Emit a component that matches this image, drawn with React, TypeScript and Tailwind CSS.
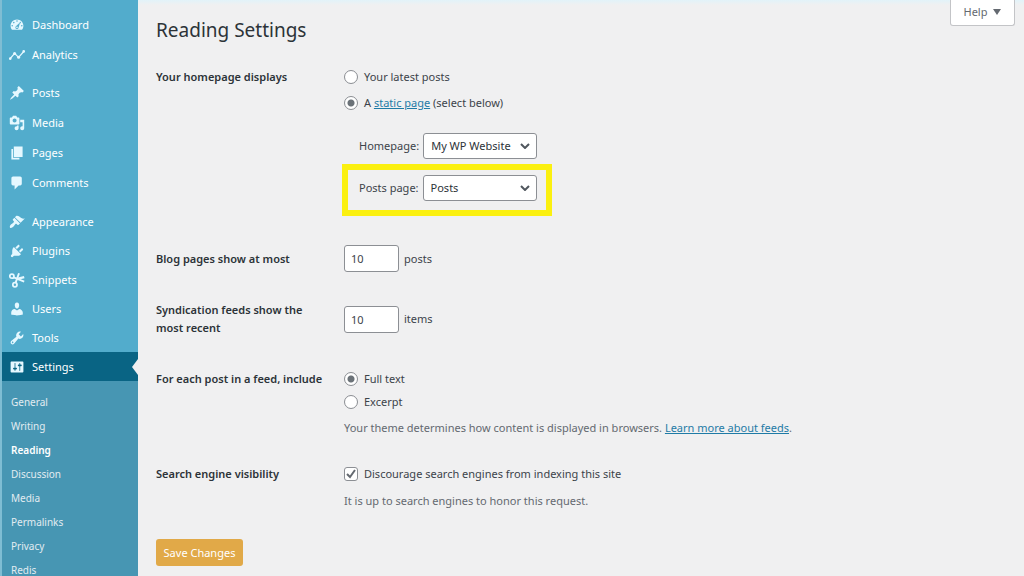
import { FC, ReactNode } from 'react';

const icons: Record<string, ReactNode> = {
  dashboard: (
    <path d="M3.76 16h12.48c1.1-1.37 1.76-3.11 1.76-5 0-4.42-3.58-8-8-8s-8 3.58-8 8c0 1.89.66 3.63 1.76 5zM10 4c.55 0 1 .45 1 1s-.45 1-1 1-1-.45-1-1 .45-1 1-1zM6 6c.55 0 1 .45 1 1s-.45 1-1 1-1-.45-1-1 .45-1 1-1zm8 0c.55 0 1 .45 1 1s-.45 1-1 1-1-.45-1-1 .45-1 1-1zm-5.37 5.55L14 6.5l-2 6.5c0 1.1-.9 2-2 2s-2-.9-2-2c0-.57.24-1.08.63-1.45zM4 10c.55 0 1 .45 1 1s-.45 1-1 1-1-.45-1-1 .45-1 1-1zm12 0c.55 0 1 .45 1 1s-.45 1-1 1-1-.45-1-1 .45-1 1-1zm-5 3c0-.55-.45-1-1-1s-1 .45-1 1 .45 1 1 1 1-.45 1-1z" />
  ),
  analytics: (
    <g>
      <path d="M1 15L7 8l5 5 7-8" fill="none" stroke="currentColor" strokeWidth="1.6" />
      <circle cx="1.6" cy="14.5" r="1.7" />
      <circle cx="7" cy="8.2" r="1.9" />
      <circle cx="12" cy="12.8" r="1.9" />
      <circle cx="18.4" cy="5.5" r="1.7" />
    </g>
  ),
  posts: (
    <path d="M10.44 3.02l1.82-1.82 6.36 6.35-1.83 1.82c-1.05-.68-2.48-.57-3.41.36l-.75.75c-.92.93-1.04 2.35-.35 3.41l-1.83 1.82-2.41-2.41-2.8 2.79c-.42.42-3.38 2.71-3.8 2.29s1.86-3.39 2.28-3.81l2.79-2.79L4.1 9.36l1.83-1.82c1.05.69 2.48.57 3.4-.36l.75-.75c.93-.92 1.05-2.35.36-3.41z" />
  ),
  media: (
    <path
      fillRule="evenodd"
      d="M13 11V4c0-.55-.45-1-1-1h-1.67L9 1H5L3.67 3H2c-.55 0-1 .45-1 1v7c0 .55.45 1 1 1h10c.55 0 1-.45 1-1zM7 4.5c1.38 0 2.5 1.12 2.5 2.5S8.38 9.5 7 9.5 4.5 8.38 4.5 7 5.62 4.5 7 4.5zM14 6h5v10.5c0 1.38-1.12 2.5-2.5 2.5S14 17.88 14 16.5s1.12-2.5 2.5-2.5c.17 0 .34.02.5.05V9h-3V6zm-4 8.05V13h2v3.5c0 1.38-1.12 2.5-2.5 2.5S7 17.88 7 16.5 8.12 14 9.5 14c.17 0 .34.02.5.05z"
    />
  ),
  pages: <path d="M6 15V2h11v13H6zm-1 1h8v2H3V5h2v11z" />,
  comments: (
    <path d="M5 2h9c1.1 0 2 .9 2 2v7c0 1.1-.9 2-2 2h-2l-5 5v-5H5c-1.1 0-2-.9-2-2V4c0-1.1.9-2 2-2z" />
  ),
  appearance: (
    <path d="M14.48 11.06L7.41 3.99l1.5-1.5c.5-.56 2.3-.47 3.51.32 1.21.8 1.43 1.28 2.91 2.1 1.18.64 2.45 1.26 4.45.85zm-.71.71L6.7 4.7 4.93 6.47c-.39.39-.39 1.02 0 1.41l1.06 1.06c.39.39.39 1.03 0 1.42-.6.6-1.43 1.11-2.21 1.69-.35.26-.7.53-1.01.84C1.43 14.23.4 16.08 1.4 17.07c.99 1 2.84-.03 4.18-1.36.31-.31.58-.66.85-1.02.57-.78 1.08-1.61 1.69-2.21.39-.39 1.02-.39 1.41 0l1.06 1.06c.39.39 1.02.39 1.41 0z" />
  ),
  plugins: (
    <path d="M13.11 4.36L9.87 7.6 8 5.73l3.24-3.24c.35-.34 1.05-.2 1.56.32.52.51.66 1.21.31 1.55zm-8 1.77l.91-1.12 9.01 9.01-1.19.84c-.71.71-2.63 1.16-3.82 1.16H6.14L4.9 17.26c-.59.59-1.54.59-2.12 0-.59-.58-.59-1.53 0-2.12l1.24-1.24v-3.88c0-1.13.4-3.19 1.09-3.89zm7.26 3.97l3.24-3.24c.34-.35 1.04-.21 1.55.31.52.51.66 1.21.31 1.55l-3.24 3.25z" />
  ),
  snippets: (
    <g fill="none" stroke="currentColor" strokeWidth="2.2">
      <circle cx="3.6" cy="5.2" r="2.6" />
      <circle cx="7.4" cy="16" r="2.6" />
      <path d="M5.8 6.6L19 12M8.2 13.6L12.5 1.5" strokeWidth="2.4" />
      <path d="M9 9l10-2.6" strokeWidth="3" />
    </g>
  ),
  users: (
    <path d="M10 9.25c-2.27 0-2.73-3.44-2.73-3.44C7 4.02 7.82 2 9.97 2c2.16 0 2.98 2.02 2.71 3.81 0 0-.41 3.44-2.68 3.44zm0 2.57L12.72 10c2.39 0 4.52 2.33 4.52 4.53v2.49s-3.65 1.13-7.24 1.13c-3.65 0-7.24-1.13-7.24-1.13v-2.49c0-2.25 1.94-4.48 4.47-4.48z" />
  ),
  tools: (
    <path d="M16.68 9.77c-1.34 1.34-3.3 1.67-4.95.99l-5.41 6.52c-.99.99-2.59.99-3.58 0s-.99-2.59 0-3.57l6.52-5.42c-.68-1.65-.35-3.61.99-4.95 1.28-1.28 3.12-1.62 4.72-1.06l-2.89 2.89 2.82 2.82 2.86-2.87c.53 1.58.18 3.39-1.08 4.65zM3.81 16.21c.4.39 1.04.39 1.43 0 .4-.4.4-1.04 0-1.43-.39-.4-1.03-.4-1.43 0-.39.39-.39 1.03 0 1.43z" />
  ),
  settings: (
    <path d="M18 16V4c0-.55-.45-1-1-1H3c-.55 0-1 .45-1 1v12c0 .55.45 1 1 1h14c.55 0 1-.45 1-1zM8 11h1c.55 0 1 .45 1 1s-.45 1-1 1H8v1.5c0 .28-.22.5-.5.5s-.5-.22-.5-.5V13H6c-.55 0-1-.45-1-1s.45-1 1-1h1V5.5c0-.28.22-.5.5-.5s.5.22.5.5V11zm5-2h-1c-.55 0-1-.45-1-1s.45-1 1-1h1V5.5c0-.28.22-.5.5-.5s.5.22.5.5V7h1c.55 0 1 .45 1 1s-.45 1-1 1h-1v5.5c0 .28-.22.5-.5.5s-.5-.22-.5-.5V9z" />
  ),
};

const menuGroups = [
  [
    { label: 'Dashboard', icon: 'dashboard' },
    { label: 'Analytics', icon: 'analytics' },
  ],
  [
    { label: 'Posts', icon: 'posts' },
    { label: 'Media', icon: 'media' },
    { label: 'Pages', icon: 'pages' },
    { label: 'Comments', icon: 'comments' },
  ],
];

const adminGroup = [
  { label: 'Appearance', icon: 'appearance' },
  { label: 'Plugins', icon: 'plugins' },
  { label: 'Snippets', icon: 'snippets' },
  { label: 'Users', icon: 'users' },
  { label: 'Tools', icon: 'tools' },
  { label: 'Settings', icon: 'settings', current: true },
];

const submenu = [
  'General',
  'Writing',
  'Reading',
  'Discussion',
  'Media',
  'Permalinks',
  'Privacy',
  'Redis',
];

const MenuLink: FC<{ label: string; icon: string; current?: boolean }> = ({
  label,
  icon,
  current,
}) => (
  <a
    href="#"
    className={`flex h-full items-center gap-[7px] pl-[7px] text-white ${
      current ? 'relative bg-[#096484]' : ''
    }`}
  >
    <svg viewBox="0 0 20 20" className="size-4 fill-current text-[#e5f8ff]">
      {icons[icon]}
    </svg>
    {label}
    {current && (
      <span className="absolute right-0 border-y-8 border-r-6 border-y-transparent border-r-[#f0f0f1]" />
    )}
  </a>
);

const Sidebar: FC = () => (
  <nav className="w-[138px] shrink-0 overflow-hidden border-l-2 border-[#7fbdd3] bg-[#52accc] pt-[10px]">
    {menuGroups.map((group, i) => (
      <ul key={i} className="mb-2">
        {group.map((item) => (
          <li key={item.label} className="h-[30px]">
            <MenuLink {...item} />
          </li>
        ))}
      </ul>
    ))}
    <ul className="pt-px">
      {adminGroup.map((item) => (
        <li key={item.label} className="h-[29px]">
          <MenuLink {...item} />
        </li>
      ))}
    </ul>
    <ul className="bg-[#4796b3] pt-[9px] text-[10px]">
      {submenu.map((label) => (
        <li key={label} className="h-6">
          <a
            href="#"
            className={`flex h-full items-center pl-[9px] ${
              label === 'Reading' ? 'font-semibold text-white' : 'text-[#e2ecf1]'
            }`}
          >
            {label}
          </a>
        </li>
      ))}
    </ul>
  </nav>
);

const Row: FC<{ label: ReactNode; className: string; children: ReactNode }> = ({
  label,
  className,
  children,
}) => (
  <div className={`flex ${className}`}>
    <div className="w-[188px] shrink-0 pr-4 font-semibold text-[#2c3338]">
      {label}
    </div>
    <div className="min-w-0 flex-1">{children}</div>
  </div>
);

const Radio: FC<{
  id: string;
  name: string;
  checked?: boolean;
  children: ReactNode;
}> = ({ id, name, checked, children }) => (
  <div className="flex items-center gap-[6px]">
    <input
      id={id}
      name={name}
      type="radio"
      defaultChecked={checked}
      className="size-[14px] appearance-none rounded-full border border-[#8c8f94] bg-white bg-clip-padding checked:bg-[radial-gradient(circle,#6b7278_3px,#fff_4px)]"
    />
    <label htmlFor={id}>{children}</label>
  </div>
);

const Select: FC<{ id: string; label: string; value: string }> = ({
  id,
  label,
  value,
}) => (
  <div className="flex items-center gap-1 whitespace-nowrap">
    <label htmlFor={id}>{label}</label>
    <div className="relative">
      <select
        id={id}
        className="block h-[26px] w-[114px] appearance-none rounded-[3px] border border-[#8c8f94] bg-white pl-[7px] text-[#2c3338]"
      >
        <option>{value}</option>
      </select>
      <svg
        viewBox="0 0 10 6"
        className="pointer-events-none absolute top-[10px] right-[7px] h-[6px] w-[10px] fill-none stroke-[#50575e] stroke-2"
      >
        <path d="M1 1l4 4 4-4" />
      </svg>
    </div>
  </div>
);

const NumberField: FC<{ id: string; unit: string }> = ({ id, unit }) => (
  <div className="flex items-center gap-[5px]">
    <input
      id={id}
      type="text"
      inputMode="numeric"
      defaultValue="10"
      className="h-[27px] w-[55px] rounded-[3px] border border-[#8c8f94] bg-white pl-[6px]"
    />
    <span>{unit}</span>
  </div>
);

export default function App() {
  return (
    <div className="flex h-screen overflow-hidden bg-[#f0f0f1] font-['Noto_Sans',sans-serif] text-[11px] leading-[18px] text-[#3c434a]">
      <Sidebar />
      <main className="relative min-w-0 flex-1 bg-linear-to-b from-[#e2f3f9] to-transparent to-[5px] pt-[17px] pl-[18px]">
        <button
          type="button"
          className="absolute top-0 right-[9px] flex h-[26px] w-[65px] items-center justify-center gap-[6px] rounded-b-[3px] border border-t-0 border-[#c3c4c7] bg-white pb-0.5 text-[#646970]"
        >
          Help
          <span className="border-x-4 border-t-[6px] border-x-transparent border-t-[#646970]" />
        </button>

        <h1 className="text-[19px] leading-[26px] text-[#2c3338]">
          Reading Settings
        </h1>

        <form>
          <Row label="Your homepage displays" className="mt-[25px]">
            <Radio id="latest" name="front">
              Your latest posts
            </Radio>
            <div className="mt-2">
              <Radio id="static" name="front" checked>
                A{' '}
                <a href="#" className="text-[#1f7ba6] underline">
                  static page
                </a>{' '}
                (select below)
              </Radio>
            </div>
            <div className="mt-[21px] pl-[15px]">
              <Select id="home" label="Homepage:" value="My WP Website" />
            </div>
            {/* Highlighted setting */}
            <div className="mt-[5px] -ml-0.5 flex h-[52px] w-[210px] items-center border-6 border-[#fbf010] pb-1 pl-[11px]">
              <Select id="posts-page" label="Posts page:" value="Posts" />
            </div>
          </Row>

          <Row
            label={<label htmlFor="per-page">Blog pages show at most</label>}
            className="mt-[29px] items-center"
          >
            <NumberField id="per-page" unit="posts" />
          </Row>

          <Row
            label={
              <label htmlFor="per-rss">Syndication feeds show the most recent</label>
            }
            className="mt-[29px] items-center"
          >
            <NumberField id="per-rss" unit="items" />
          </Row>

          <Row label="For each post in a feed, include" className="mt-[33px]">
            <Radio id="full" name="feed" checked>
              Full text
            </Radio>
            <div className="mt-[5px]">
              <Radio id="excerpt" name="feed">
                Excerpt
              </Radio>
            </div>
            <p className="mt-2 text-[#646970]">
              Your theme determines how content is displayed in browsers.{' '}
              <a href="#" className="text-[#1f7ba6] underline">
                Learn more about feeds
              </a>
              .
            </p>
          </Row>

          <Row label="Search engine visibility" className="mt-7">
            <div className="flex items-center gap-[6px]">
              <span className="relative flex">
                <input
                  id="noindex"
                  type="checkbox"
                  defaultChecked
                  className="size-[14px] appearance-none rounded-[3px] border border-[#8c8f94] bg-white"
                />
                <svg
                  viewBox="0 0 14 14"
                  className="pointer-events-none absolute inset-0 size-[14px] fill-none stroke-[#646970] stroke-2"
                >
                  <path d="M3 7l3 3 5-7" />
                </svg>
              </span>
              <label htmlFor="noindex">
                Discourage search engines from indexing this site
              </label>
            </div>
            <p className="mt-[9px] text-[#646970]">
              It is up to search engines to honor this request.
            </p>
          </Row>

          <button
            type="submit"
            className="mt-[29px] h-[27px] w-[87px] rounded-[3px] bg-[#e1a948] text-white"
          >
            Save Changes
          </button>
        </form>
      </main>
    </div>
  );
}
